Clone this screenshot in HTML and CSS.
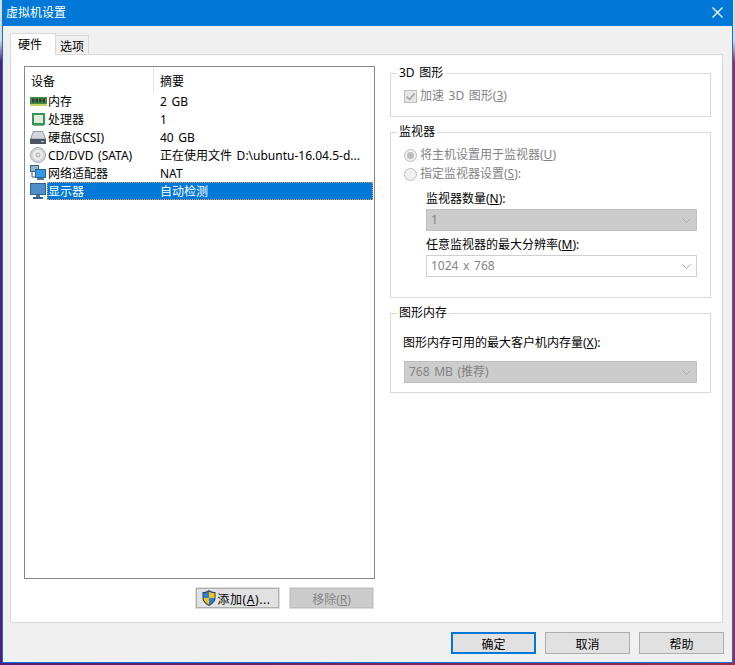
FILE: index.html
```html
<!DOCTYPE html>
<html lang="zh-CN">
<head>
<meta charset="utf-8">
<title>虚拟机设置</title>
<link rel="stylesheet" href="styles.css">
</head>
<body>
<div class="window">
  <header class="titlebar">
    <span class="title">虚拟机设置</span>
    <svg class="close" width="11" height="11" viewBox="0 0 11 11"><path d="M.5.5l10 10M10.500.5l-10 10" stroke="#fff" stroke-width="1.300" fill="none"/></svg>
  </header>
  <div class="tabs">
    <div class="tab tab-active">硬件</div>
    <div class="tab">选项</div>
  </div>
  <div class="panel">
    <div class="left">
      <div class="list">
        <div class="list-head">
          <span class="head-device">设备</span>
          <span class="head-summary">摘要</span>
        </div>
        <div class="row">
          <svg class="icon" width="17" height="16" viewBox="0 0 17 16"><rect x="0" y="4" width="17" height="7" fill="#3f8f45"/><rect x="0" y="11" width="17" height="2" fill="#c6d46a"/><path d="M2 5.500h2.500v4H2zM5.500 5.500H8v4H5.500zM9 5.500h2.500v4H9zM12.500 5.500H15v4h-2.500z" fill="#3c3c34"/></svg>
          <div class="cells"><span class="name">内存</span><span class="summary">2 GB</span></div>
        </div>
        <div class="row">
          <svg class="icon" width="17" height="16" viewBox="0 0 17 16"><rect x="2" y="2" width="13" height="12" fill="#2f9a55"/><rect x="4" y="4" width="9" height="8" fill="#e4e8dc"/><path d="M3 14h11v1H3z" fill="#8aa88a"/></svg>
          <div class="cells"><span class="name">处理器</span><span class="summary">1</span></div>
        </div>
        <div class="row">
          <svg class="icon" width="17" height="16" viewBox="0 0 17 16"><path d="M3 2h10l3 8v5H0v-5z" fill="#8f98a2"/><path d="M3.500 3h9l2.200 6.500H1.500z" fill="#d3d7dc"/><rect x="0" y="10" width="16" height="5" fill="#4a5560"/><rect x="11" y="12" width="3" height="1" fill="#9fd3f0"/></svg>
          <div class="cells"><span class="name">硬盘(SCSI)</span><span class="summary">40 GB</span></div>
        </div>
        <div class="row">
          <svg class="icon" width="17" height="16" viewBox="0 0 17 16"><circle cx="8" cy="8" r="7.500" fill="#d4d7da" stroke="#a5a9ad"/><circle cx="8" cy="8" r="5" fill="#eceef0"/><circle cx="8" cy="8" r="2.500" fill="#b5b9bd"/><circle cx="8" cy="8" r="1" fill="#fff"/></svg>
          <div class="cells"><span class="name">CD/DVD (SATA)</span><span class="summary">正在使用文件 D:\ubuntu-16.04.5-d...</span></div>
        </div>
        <div class="row">
          <svg class="icon" width="17" height="16" viewBox="0 0 17 16"><rect x="0" y="0" width="9" height="7" fill="#44617a"/><rect x="1" y="1" width="7" height="5" fill="#8fb4d0"/><path d="M2 7v5h3" stroke="#44617a" fill="none"/><rect x="5" y="4" width="11" height="9" fill="#2d5f8f"/><rect x="6" y="5" width="9" height="7" fill="#2f9be6"/><rect x="7" y="13" width="7" height="2" fill="#5b7c99"/></svg>
          <div class="cells"><span class="name">网络适配器</span><span class="summary">NAT</span></div>
        </div>
        <div class="row">
          <svg class="icon" width="17" height="16" viewBox="0 0 17 16"><rect x="0" y="0" width="16" height="12" fill="#34638f"/><rect x="1" y="1" width="14" height="10" fill="#4f8fc7"/><rect x="6" y="12" width="4" height="2" fill="#4a7396"/><rect x="3" y="14" width="10" height="2" fill="#34638f"/></svg>
          <div class="cells cells-selected"><span class="name">显示器</span><span class="summary">自动检测</span></div>
        </div>
      </div>
      <div class="list-actions">
        <div class="btn">
          <svg class="shield" width="16" height="16" viewBox="0 0 16 16"><path d="M8 0C6 1.500 4 2 1.500 2v6c0 3.500 3 6 6.500 8 3.500-2 6.500-4.500 6.500-8V2C12 2 10 1.500 8 0z" fill="#2b3f66"/><path d="M8 1.500V8H2.500V3C4.500 3 6.500 2.500 8 1.500z" fill="#2a7fd6"/><path d="M8 1.500c1.500 1 3.500 1.500 5.500 1.500v5H8z" fill="#f5c21a"/><path d="M2.500 8H8v6.800C5 13 2.500 11 2.500 8z" fill="#f5c21a"/><path d="M8 8h5.500c0 3-2.500 5-5.500 6.800z" fill="#2a7fd6"/></svg>
          <span class="add-label">添加(<u>A</u>)...</span>
        </div>
        <div class="btn btn-disabled"><span>移除(<u>R</u>)</span></div>
      </div>
    </div>
    <div class="right">
      <fieldset class="group group-3d">
        <legend>3D 图形</legend>
        <div class="option">
          <svg class="check" width="13" height="13" viewBox="0 0 13 13"><rect x=".5" y=".5" width="12" height="12" fill="#e6e6e6" stroke="#bcbcbc"/><path d="M2.500 6.500l3 3 5-6" fill="none" stroke="#a0a0a0" stroke-width="1.500"/></svg>
          <span>加速 3D 图形(<u>3</u>)</span>
        </div>
      </fieldset>
      <fieldset class="group group-monitor">
        <legend>监视器</legend>
        <div class="option">
          <svg class="check" width="13" height="13" viewBox="0 0 13 13"><circle cx="6.500" cy="6.500" r="6" fill="#f0f0f0" stroke="#bcbcbc"/><circle cx="6.500" cy="6.500" r="3.500" fill="#bcbcbc"/></svg>
          <span>将主机设置用于监视器(<u>U</u>)</span>
        </div>
        <div class="option option-next">
          <svg class="check" width="13" height="13" viewBox="0 0 13 13"><circle cx="6.500" cy="6.500" r="6" fill="#f0f0f0" stroke="#bcbcbc"/></svg>
          <span>指定监视器设置(<u>S</u>):</span>
        </div>
        <div class="nested">
          <div class="field-label">监视器数量(<u>N</u>):</div>
          <div class="select select-off">
            <span>1</span>
            <svg width="9" height="5" viewBox="0 0 9 5"><path d="M.5.500l4 4 4-4" fill="none" stroke="#a8a8a8"/></svg>
          </div>
          <div class="field-label field-label-next">任意监视器的最大分辨率(<u>M</u>):</div>
          <div class="select">
            <span>1024 x 768</span>
            <svg width="9" height="5" viewBox="0 0 9 5"><path d="M.5.500l4 4 4-4" fill="none" stroke="#a8a8a8"/></svg>
          </div>
        </div>
      </fieldset>
      <fieldset class="group group-memory">
        <legend>图形内存</legend>
        <div class="field-label memory-label">图形内存可用的最大客户机内存量(<u>X</u>):</div>
        <div class="select select-off select-wide">
          <span>768 MB (推荐)</span>
          <svg width="9" height="5" viewBox="0 0 9 5"><path d="M.5.500l4 4 4-4" fill="none" stroke="#a8a8a8"/></svg>
        </div>
      </fieldset>
    </div>
  </div>
  <footer class="footer">
    <div class="btn btn-default"><span>确定</span></div>
    <div class="btn"><span>取消</span></div>
    <div class="btn"><span>帮助</span></div>
  </footer>
</div>
</body>
</html>
```
FILE: styles.css
```css
* { box-sizing: border-box; }
html, body { height: 100%; }
body {
  margin: 0;
  padding: 0 2px 2px;
  overflow: hidden;
  font: 12px/18px "Noto Sans", "Noto Sans CJK SC", sans-serif;
  word-spacing: 1.5px;
  color: #000;
  background:
    linear-gradient(to bottom, #d4dcea 0, #d4dcea 40px, rgba(212,220,234,0) 62px),
    linear-gradient(to right, #571a78, #a02b4c);
}
.window {
  width: 731px;
  height: 663px;
  border: 1px solid #0078d7;
  border-top: 0;
  background: #f0f0f0;
  display: flex;
  flex-direction: column;
}
.titlebar {
  height: 26px;
  flex: none;
  background: #0078d7;
  color: #fff;
  display: flex;
  align-items: center;
  justify-content: space-between;
  padding: 0 9px 1px 3px;
}
.close { display: block; }
.tabs {
  flex: none;
  display: flex;
  align-items: flex-end;
  height: 22px;
  margin: 6px 0 0 7px;
  position: relative;
  z-index: 1;
}
.tab {
  height: 19px;
  padding: 2px 4px 0;
  border: 1px solid #d9d9d9;
  border-left: 0;
  border-bottom: 0;
  line-height: 18px;
}
.tab-active {
  height: 22px;
  width: 46px;
  padding: 2px 0 0 7px;
  background: #fff;
  border-left: 1px solid #d9d9d9;
  margin-bottom: -1px;
}
.panel {
  flex: none;
  height: 569px;
  margin: 0 9px 0 7px;
  border: 1px solid #d9d9d9;
  background: #fff;
  padding: 11px 11px 0 13px;
  display: grid;
  grid-template-columns: 351px 321px;
  column-gap: 15px;
  align-items: start;
}
.list {
  height: 513px;
  border: 1px solid #828790;
  background: #fff;
}
.list-head {
  height: 25px;
  display: flex;
  align-items: flex-start;
  padding-top: 1px;
}
.head-device {
  width: 129px;
  padding-left: 6px;
  height: 24px;
  line-height: 28px;
  border-right: 1px solid #e5e5e5;
}
.head-summary { padding-left: 6px; line-height: 28px; }
.row {
  height: 18px;
  display: flex;
  align-items: center;
  padding-left: 5px;
}
.icon { flex: none; display: block; }
.cells {
  flex: none;
  width: 326px;
  height: 18px;
  display: flex;
  padding: 1px 0 0 1px;
}
.cells-selected {
  background: #0078d7;
  color: #fff;
  outline: 1px dotted #e0a060;
  outline-offset: -1px;
}
.name { width: 112px; flex: none; white-space: nowrap; }
.summary { white-space: nowrap; }
.list-actions {
  margin-top: 8px;
  padding-right: 1px;
  display: flex;
  justify-content: flex-end;
  gap: 9px;
}
.btn {
  width: 85px;
  height: 22px;
  background: #e1e1e1;
  border: 1px solid #adadad;
  display: flex;
  align-items: center;
  justify-content: center;
  padding-top: 4px;
}
.shield { flex: none; margin: -4px 0 0 -3px; }
.add-label { letter-spacing: .6px; }
.list-actions .btn {
  border-color: #dedede;
  box-shadow: inset 0 0 0 1px #adadad;
}
.list-actions .btn-disabled {
  background: #cccccc;
  color: #838383;
  box-shadow: inset 0 0 0 1px #bfbfbf;
}
.btn-default {
  border: 2px solid #0078d7;
}
.right { display: flex; flex-direction: column; gap: 8px; }
.group {
  margin: 0;
  padding: 0;
  min-width: 0;
  border: 1px solid #d9d9d9;
}
.group legend {
  margin-left: 6px;
  padding: 0 2px;
  line-height: 14px;
  height: 14px;
}
.group-3d { height: 51px; padding-top: 7px; }
.group-monitor { height: 173px; padding-top: 7px; }
.group-memory { height: 87px; padding-top: 14px; }
.option {
  display: flex;
  align-items: center;
  height: 18px;
  margin-left: 13px;
  color: #838383;
}
.option-next { margin-top: 1px; }
.check { flex: none; display: block; margin-right: 3px; }
.nested { margin: 7px 0 0 35px; }
.field-label { height: 18px; }
.field-label-next { margin-top: 5px; }
.memory-label { margin-left: 12px; }
.select {
  width: 271px;
  height: 22px;
  margin-top: 1px;
  border: 1px solid #cfcfcf;
  background: #fff;
  color: #838383;
  display: flex;
  align-items: center;
  justify-content: space-between;
  padding: 0 5px 0 4px;
}
.select-off {
  background: #cccccc;
  border-color: #bfbfbf;
}
.select-wide {
  width: 293px;
  margin: 9px 0 0 13px;
}
.footer {
  flex: none;
  display: flex;
  justify-content: flex-end;
  gap: 9px;
  margin-top: 9px;
  padding-right: 8px;
}
```
